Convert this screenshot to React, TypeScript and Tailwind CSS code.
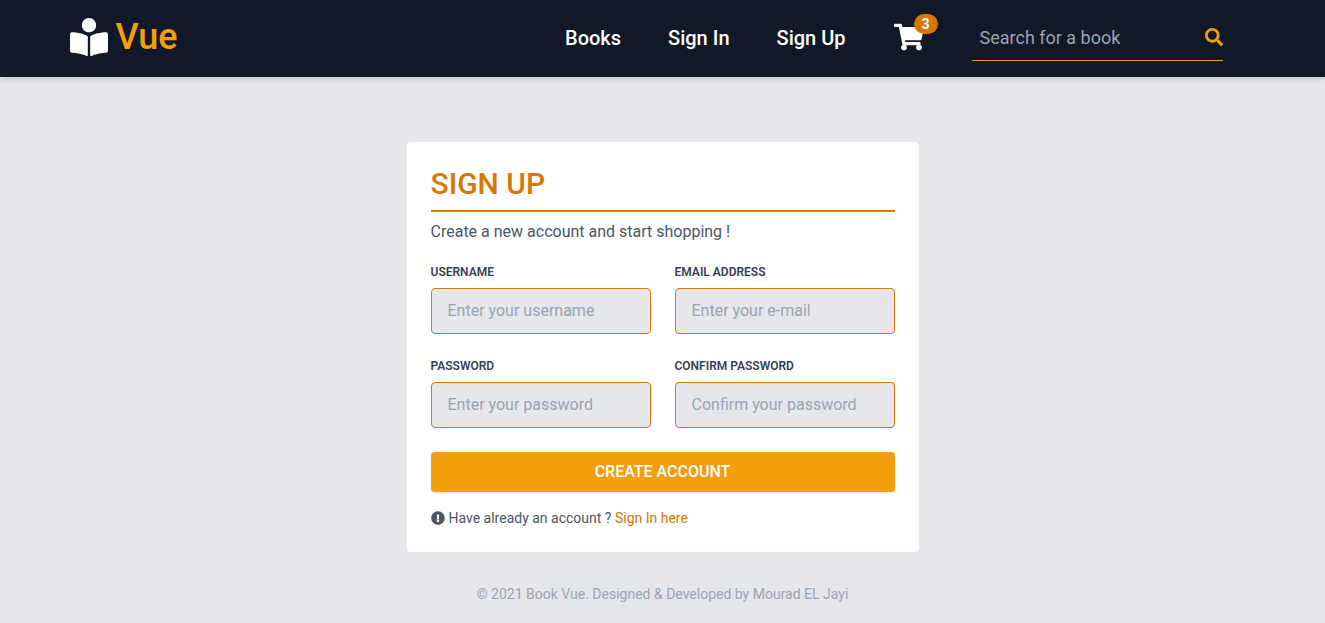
import { FaBookReader, FaExclamationCircle, FaSearch, FaShoppingCart } from "react-icons/fa";

type FieldProps = { id: string; label: string; placeholder: string; type: string };

const fields: FieldProps[] = [
  { id: "username", label: "Username", placeholder: "Enter your username", type: "text" },
  { id: "email", label: "Email address", placeholder: "Enter your e-mail", type: "email" },
  { id: "password", label: "Password", placeholder: "Enter your password", type: "password" },
  { id: "confirm", label: "Confirm password", placeholder: "Confirm your password", type: "password" },
];

function Field({ id, label, placeholder, type }: FieldProps) {
  return (
    <div className="flex flex-col gap-2">
      <label htmlFor={id} className="text-xs font-semibold text-[#374151] uppercase">
        {label}
      </label>
      <input
        id={id}
        type={type}
        placeholder={placeholder}
        className="w-full rounded border border-[#d97706] bg-[#e5e7eb] px-4 py-3 leading-5 text-[#374151] outline-none placeholder:text-[#9ca3af]"
      />
    </div>
  );
}

function Header() {
  return (
    <header className="bg-[#111827] shadow-md">
      <div className="mx-auto flex max-w-7xl items-center justify-between py-4 pr-20 pl-[47px]">
        <a href="#home" className="flex items-center gap-2 pb-1 text-4xl font-medium text-[#f59e0b]">
          <FaBookReader size={38} className="text-white" />
          <span>Vue</span>
        </a>
        <div className="flex items-center gap-12">
          <nav className="flex gap-[47px] pb-0.5 text-xl font-medium text-white">
            <a href="#books">Books</a>
            <a href="#signin">Sign In</a>
            <a href="#signup">Sign Up</a>
          </nav>
          <a href="#cart" aria-label="Cart" className="relative pb-1 text-white">
            <FaShoppingCart size={30} />
            <span className="absolute -top-2 left-5 rounded-full bg-[#d97706] px-2 text-sm leading-5 font-bold">3</span>
          </a>
          <form className="flex items-center border-b border-[#f59e0b]">
            <input
              type="text"
              aria-label="Search for a book"
              placeholder="Search for a book"
              className="w-[233px] px-2 py-2 text-lg text-white outline-none placeholder:text-[#9ca3af]"
            />
            <button type="submit" aria-label="Search" className="pb-0.5 text-lg text-[#f59e0b]">
              <FaSearch />
            </button>
          </form>
        </div>
      </div>
    </header>
  );
}

export default function App() {
  return (
    <div className="flex min-h-screen flex-col bg-[#e5e7eb] font-[Roboto,sans-serif]">
      <Header />
      <main className="px-4 pt-[65px]">
        <section className="mx-auto max-w-lg rounded bg-white p-6">
          <h1 className="border-b-2 border-[#d97706] pb-2 text-3xl font-medium text-[#d97706] uppercase">Sign Up</h1>
          <p className="mt-2 text-[#4b5563]">Create a new account and start shopping !</p>
          <form className="mt-5">
            <div className="grid grid-cols-2 gap-6">
              {fields.map((field) => (
                <Field key={field.id} {...field} />
              ))}
            </div>
            <button type="submit" className="mt-6 w-full rounded-sm bg-[#f59e0b] py-2 font-medium text-white uppercase shadow-sm">
              Create account
            </button>
          </form>
          <p className="mt-4 flex items-center gap-1 text-sm text-[#4b5563]">
            <FaExclamationCircle />
            <span>
              Have already an account ?{" "}
              <a href="#signin" className="text-[#d97706]">
                Sign In here
              </a>
            </span>
          </p>
        </section>
      </main>
      <footer className="px-4 py-8 text-center text-sm text-[#9ca3af]">
        © 2021 Book Vue. Designed &amp; Developed by Mourad EL Jayi
      </footer>
    </div>
  );
}
